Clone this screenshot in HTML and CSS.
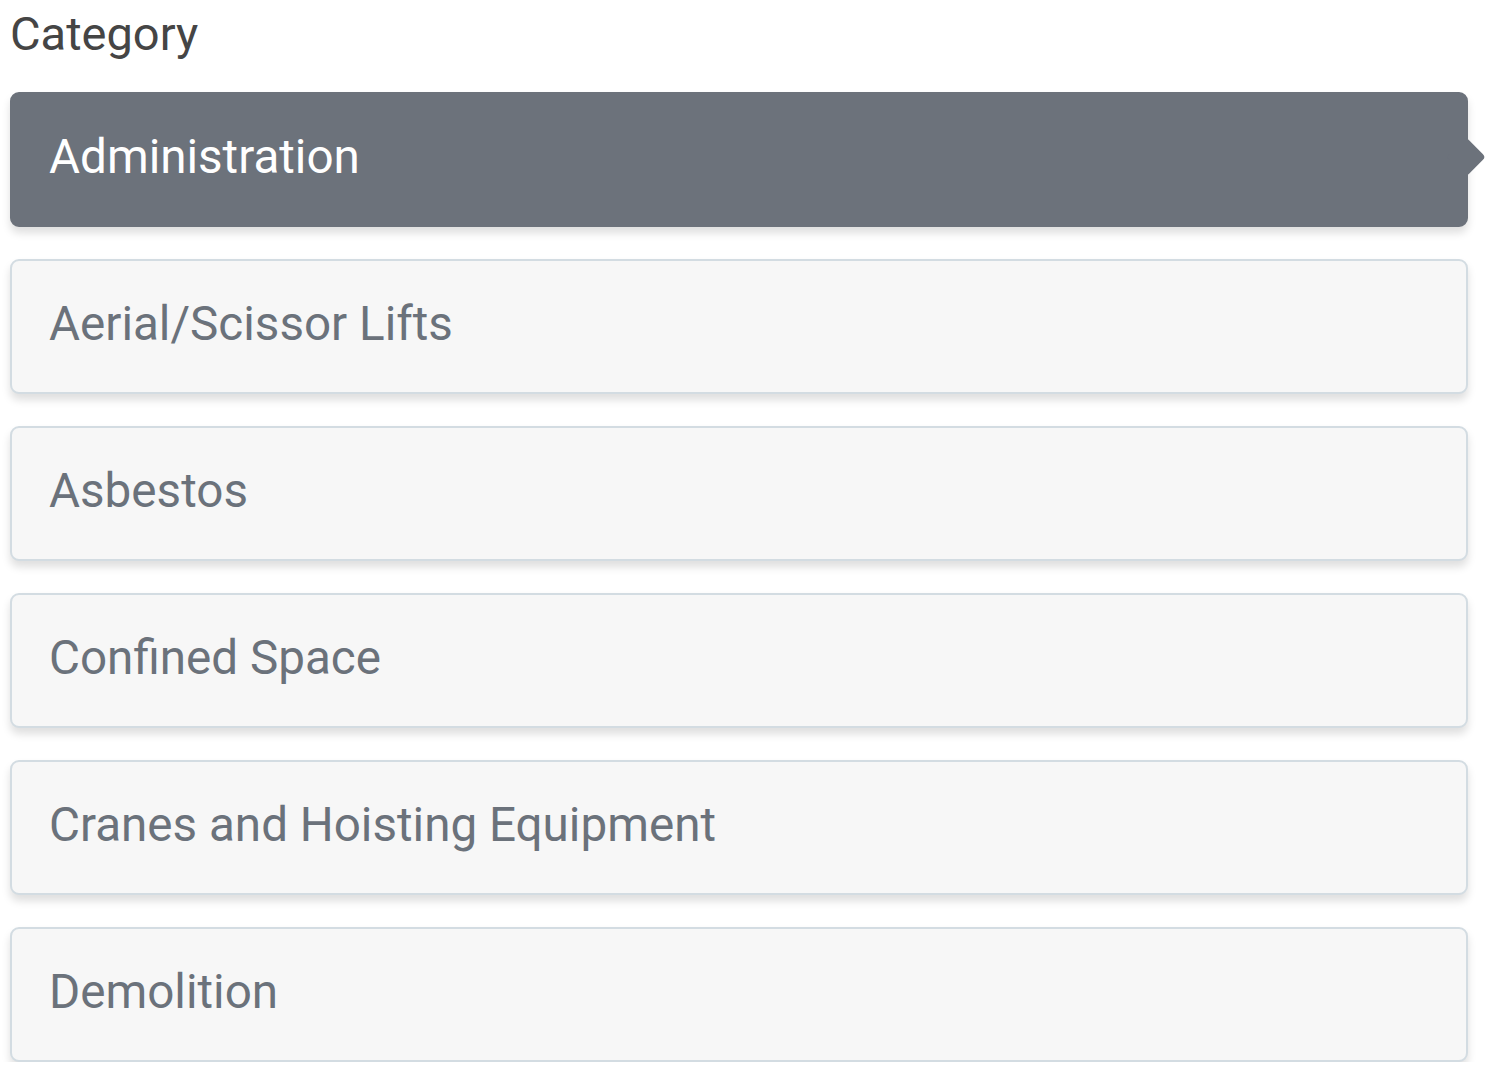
FILE: index.html
```html
<!DOCTYPE html>
<html>
<head>
<meta charset="utf-8">
<link rel="stylesheet" href="styles.css">
</head>
<body>
<div class="panel">
  <div class="label">Category</div>
  <ul class="list">
    <li class="item active">Administration</li>
    <li class="item">Aerial/Scissor Lifts</li>
    <li class="item">Asbestos</li>
    <li class="item">Confined Space</li>
    <li class="item">Cranes and Hoisting Equipment</li>
    <li class="item">Demolition</li>
  </ul>
</div>
</body>
</html>
```
FILE: styles.css
```css
html, body {
  margin: 0;
  padding: 0;
  background: #ffffff;
}
body {
  font-family: Roboto, "Liberation Sans", sans-serif;
}
.panel {
  width: 1458px;
  padding: 6px 0 0 10px;
}
.label {
  font-size: 47px;
  line-height: 56px;
  color: #454545;
}
.list {
  list-style: none;
  margin: 30px 0 0 0;
  padding: 0;
  display: flex;
  flex-direction: column;
  gap: 32px;
}
.item {
  position: relative;
  box-sizing: border-box;
  height: 135px;
  display: flex;
  align-items: center;
  padding: 0 0 6px 37px;
  font-size: 47.6px;
  color: #6b727b;
  background: #f7f7f7;
  border: 2px solid #d3dce2;
  border-radius: 9px;
  box-shadow: 0 6px 9px rgba(0, 0, 0, 0.13);
}
.item.active {
  background: #6c727b;
  border-color: #6c727b;
  color: #ffffff;
}
.item.active::after {
  content: "";
  position: absolute;
  right: -14px;
  top: 50%;
  width: 28px;
  height: 28px;
  margin-top: -16.5px;
  background: #6c727b;
  border-radius: 4px;
  transform: rotate(45deg);
}
```
